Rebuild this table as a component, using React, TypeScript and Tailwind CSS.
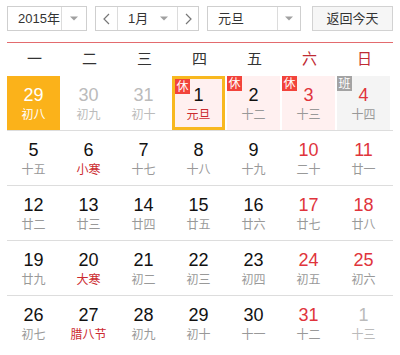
import * as React from "react";

type Day = {
  num: number;
  lunar: string;
  muted?: boolean; // 非本月
  weekend?: boolean;
  festival?: boolean; // 节气/节日
  badge?: "休" | "班";
  picked?: boolean; // 黄色底
  today?: boolean; // 黄色边框
};

const weekNames = ["一", "二", "三", "四", "五", "六", "日"];

const rows: Day[][] = [
  [
    { num: 29, lunar: "初八", muted: true, picked: true },
    { num: 30, lunar: "初九", muted: true },
    { num: 31, lunar: "初十", muted: true },
    { num: 1, lunar: "元旦", festival: true, badge: "休", today: true },
    { num: 2, lunar: "十二", badge: "休" },
    { num: 3, lunar: "十三", weekend: true, badge: "休" },
    { num: 4, lunar: "十四", weekend: true, badge: "班" },
  ],
  [
    { num: 5, lunar: "十五" },
    { num: 6, lunar: "小寒", festival: true },
    { num: 7, lunar: "十七" },
    { num: 8, lunar: "十八" },
    { num: 9, lunar: "十九" },
    { num: 10, lunar: "二十", weekend: true },
    { num: 11, lunar: "廿一", weekend: true },
  ],
  [
    { num: 12, lunar: "廿二" },
    { num: 13, lunar: "廿三" },
    { num: 14, lunar: "廿四" },
    { num: 15, lunar: "廿五" },
    { num: 16, lunar: "廿六" },
    { num: 17, lunar: "廿七", weekend: true },
    { num: 18, lunar: "廿八", weekend: true },
  ],
  [
    { num: 19, lunar: "廿九" },
    { num: 20, lunar: "大寒", festival: true },
    { num: 21, lunar: "初二" },
    { num: 22, lunar: "初三" },
    { num: 23, lunar: "初四" },
    { num: 24, lunar: "初五", weekend: true },
    { num: 25, lunar: "初六", weekend: true },
  ],
  [
    { num: 26, lunar: "初七" },
    { num: 27, lunar: "腊八节", festival: true },
    { num: 28, lunar: "初九" },
    { num: 29, lunar: "初十" },
    { num: 30, lunar: "十一" },
    { num: 31, lunar: "十二", weekend: true },
    { num: 1, lunar: "十三", muted: true },
  ],
];

function Caret() {
  return (
    <svg width="8" height="5" viewBox="0 0 8 5" className="block">
      <path d="M0 0.5 L8 0.5 L4 4.5 Z" fill="#a0a0a0" />
    </svg>
  );
}

function Chevron({ dir }: { dir: "left" | "right" }) {
  return (
    <svg width="7" height="12" viewBox="0 0 7 12" className="block">
      <polyline
        points={dir === "left" ? "6,1 1,6 6,11" : "1,1 6,6 1,11"}
        fill="none"
        stroke="#777"
        strokeWidth="1.2"
      />
    </svg>
  );
}

function DayCell({ d }: { d: Day }) {
  let bg = "bg-white";
  if (d.picked) bg = "bg-[#fbb21a]";
  else if (d.badge === "休") bg = "bg-[#fff0f0]";
  else if (d.badge === "班") bg = "bg-[#f4f4f4]";

  let numColor = "text-[#111]";
  if (d.picked) numColor = "text-white";
  else if (d.muted) numColor = "text-[#bbbbbb]";
  else if (d.weekend) numColor = "text-[#e0343c]";

  let lunarColor = "text-[#999]";
  if (d.picked) lunarColor = "text-white";
  else if (d.muted) lunarColor = "text-[#bbbbbb]";
  else if (d.festival) lunarColor = "text-[#cc2a2f]";

  return (
    <div className="w-[55px] h-full pr-[2px]">
      <div
        className={`relative h-full flex flex-col items-center ${bg} ${
          d.today ? "border-[3px] border-[#f8b81f]" : ""
        }`}
      >
        {d.badge && (
          <span
            className={`absolute left-0 top-0 w-[15px] h-[15px] flex items-center justify-center text-[12px] leading-none text-white ${
              d.badge === "休" ? "bg-[#f2433b]" : "bg-[#a3a3a3]"
            } ${d.today ? "-left-[3px] -top-[3px]" : ""}`}
          >
            {d.badge}
          </span>
        )}
        <span
          className={`${d.today ? "mt-[6px]" : "mt-[9px]"} text-[18px] leading-[21px] ${numColor}`}
        >
          {d.num}
        </span>
        <span className={`mt-[2px] text-[12px] leading-[14px] ${lunarColor}`}>
          {d.lunar}
        </span>
      </div>
    </div>
  );
}

export default function App() {
  return (
    <div
      className="w-[400px] h-[355px] bg-white overflow-hidden px-[7px] pt-[6px]"
      style={{ fontFamily: '"Liberation Sans", "Noto Sans CJK SC", sans-serif' }}
    >
      {/* 顶部选择栏 */}
      <div className="flex items-center h-[25px] text-[13px] text-[#333] whitespace-nowrap">
        <div className="w-[80px] h-[25px] flex border border-[#cfcfcf]">
          <div className="flex-1 flex items-center pl-[10px]">2015年</div>
          <div className="w-[25px] border-l border-[#dcdcdc] flex items-center justify-center">
            <Caret />
          </div>
        </div>
        <div className="ml-[8px] w-[104px] h-[25px] flex border border-[#cfcfcf]">
          <div className="w-[22px] border-r border-[#dcdcdc] flex items-center justify-center">
            <Chevron dir="left" />
          </div>
          <div className="flex-1 flex items-center justify-between pl-[10px] pr-[9px]">
            <span>1月</span>
            <Caret />
          </div>
          <div className="w-[21px] border-l border-[#dcdcdc] flex items-center justify-center">
            <Chevron dir="right" />
          </div>
        </div>
        <div className="ml-[8px] w-[94px] h-[25px] flex border border-[#cfcfcf]">
          <div className="flex-1 flex items-center pl-[10px]">元旦</div>
          <div className="w-[23px] border-l border-[#dcdcdc] flex items-center justify-center">
            <Caret />
          </div>
        </div>
        <button className="ml-[11px] w-[81px] h-[25px] border border-[#d2d2d2] bg-[#f6f6f6] text-[13px] text-[#333] flex items-center justify-center">
          返回今天
        </button>
      </div>

      {/* 星期 */}
      <div className="mt-[11px] border-t border-[#e36b6e] flex h-[34px] text-[15px]">
        {weekNames.map((w, i) => (
          <div
            key={w}
            className={`w-[55px] flex items-center justify-center ${
              i >= 5 ? "text-[#bf2b33]" : "text-[#333]"
            }`}
          >
            {w}
          </div>
        ))}
      </div>

      {/* 日期 */}
      <div className="flex flex-col">
        {rows.map((row, ri) => (
          <div
            key={ri}
            className={`flex h-[55px] ${
              ri < rows.length - 1 ? "border-b border-[#dddddd]" : ""
            }`}
          >
            {row.map((d, ci) => (
              <DayCell key={ci} d={d} />
            ))}
          </div>
        ))}
      </div>
    </div>
  );
}
